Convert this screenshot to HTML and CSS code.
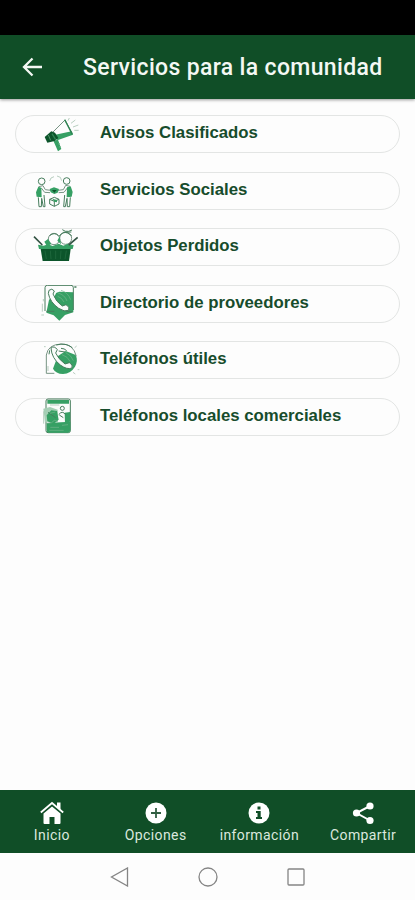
FILE: index.html
```html
<!DOCTYPE html>
<html lang="es">
<head>
    <meta charset="UTF-8">
    <meta name="viewport" content="width=device-width, initial-scale=1.0">
    <title>Servicios para la comunidad</title>
    <link rel="stylesheet" href="styles.css">
</head>
<body>
    <div class="status-bar"></div>
    <header class="header">
        <svg class="back" viewBox="0 0 24 24"><path d="M22 12H4M12.5 3.5L4 12L12.5 20.5"/></svg>
        <h1>Servicios para la comunidad</h1>
    </header>

    <main class="lista">
        <a class="item">
            <svg class="icono" viewBox="0 0 150 111">
                <path class="linea" d="M61 50L99 12L120 51L78 64"/>
                <path class="verde" d="M70 56L119 46L123 56L76 73ZM64 74L78 71L88 99L78 106Z"/>
                <path class="oscuro" d="M38 63L58 46L69 50L79 66L68 75L46 80Z"/>
                <path class="grueso-verde" d="M98 11L121 55M60 53L71 71"/>
                <path class="puntos" d="M108 14L112 6M117 22L130 12M123 33L139 27M127 43L140 43"/>
                <path class="claro" d="M49 57L56 73M78 84L84 82M81 93L87 91"/>
            </svg>
            <span>Avisos Clasificados</span>
        </a>
        <a class="item">
            <svg class="icono" viewBox="0 0 150 111">
                <circle class="trazo" cx="29" cy="28" r="10"/>
                <circle class="trazo" cx="104" cy="27" r="10"/>
                <path class="linea" d="M20 44L33 41L40 53L56 55M28 48L38 61L54 62M114 43L101 40L94 53L78 55M106 48L96 61L80 62"/>
                <path class="trazo" d="M19 76L21 104H28L29 79L34 104H39L36 69M115 76L113 104H106L105 79L100 104H95L98 69"/>
                <path class="verde" d="M19 44L28 47L29 76L14 74L12 61ZM116 43L105 46L104 76L119 74L122 60Z"/>
                <path class="verde" d="M53 51L66 46L81 51L77 62L67 66L56 61Z"/>
                <path class="oscuro" d="M60 54H74L67 62Z"/>
                <path class="trazo" d="M53 82L67 76L81 82V96L67 103L53 96ZM53 82L67 88L81 82M67 88V103"/>
                <path class="verde" d="M61 80L75 84V91L67 89Z"/>
                <path class="puntos" d="M53 27L57 18L66 14M75 12L85 16L89 26"/>
            </svg>
            <span>Servicios Sociales</span>
        </a>
        <a class="item">
            <svg class="icono" viewBox="0 0 150 111">
                <circle class="linea" cx="66" cy="30" r="17"/>
                <circle class="linea" cx="101" cy="28" r="18"/>
                <path class="trazo" d="M53 20Q67 8 79 20M81 22Q92 6 107 12L119 20M91 2Q99 9 110 7L120 3M94 10L118 9"/>
                <path class="verde" d="M18 47L35 50L48 46L62 51L80 44L94 50L106 45L125 48L122 60H21Z"/>
                <path class="verde" d="M37 38L48 30L58 45L45 52ZM76 35L83 22L87 46Z"/>
                <path class="oscuro" d="M26 60H116L111 96H32Z"/>
                <path class="grueso" d="M6 23L31 48M137 25L110 48"/>
                <path class="trama" d="M39 65L43 90M55 65L57 90M71 65V90M87 65L85 90M103 65L99 90"/>
            </svg>
            <span>Objetos Perdidos</span>
        </a>
        <a class="item">
            <svg class="icono" viewBox="0 0 150 111">
                <path class="verde" d="M54 30L82 20L124 22V82L99 90L82 107L65 91L43 83Z"/>
                <path class="trazo" d="M46 1H117Q124 1 124 8V75M39 78V8Q39 1 46 1"/>
                <path class="blanco" d="M43 5H81L68 33L46 47Z"/>
                <path class="blanco trazo" d="M51 16Q60 8 67 18L63 27Q72 51 91 63L102 59Q115 66 110 76Q98 82 80 70Q54 52 49 25Z"/>
                <path class="claro" d="M78 24Q98 29 105 48M87 16Q108 22 116 44M77 34Q90 38 96 51"/>
                <path class="trazo" d="M43 79H67M103 80H121M129 6H134M129 3V9"/>
                <path class="puntos" d="M31 56V80M28 90H36M34 42V49"/>
            </svg>
            <span>Directorio de proveedores</span>
        </a>
        <a class="item">
            <svg class="icono" viewBox="0 0 150 111">
                <path class="verde" d="M77 43L101 27L131 39Q139 56 129 74Q116 95 93 96Q71 95 63 80Z"/>
                <path class="linea" d="M43 94V39Q48 7 88 6Q124 5 133 43M43 94H67"/>
                <path class="blanco trazo" d="M57 18Q67 10 76 23L71 33Q78 50 99 66L112 62Q124 68 120 78Q105 84 85 69Q59 49 57 18Z"/>
                <path class="claro" d="M90 38Q108 44 114 58M101 32Q118 39 124 56"/>
                <path class="trazo" d="M73 9Q101 1 121 17M87 19Q97 19 104 26M80 27L99 30M53 25L51 37"/>
                <path class="puntos" d="M36 14H41M128 17L134 12M123 91L130 96M137 83H142M48 87V72"/>
            </svg>
            <span>Teléfonos útiles</span>
        </a>
        <a class="item">
            <svg class="icono" viewBox="0 0 150 111">
                <rect class="blanco trazo" x="42" y="3" width="73" height="101" rx="6"/>
                <path class="verde" d="M46 6H111V17H46ZM44 75L115 71V98Q113 104 107 104H50Q43 102 44 96Z"/>
                <path class="suave" d="M34 32L54 27L77 35V71L39 73Z"/>
                <path class="verde" d="M44 52L58 37L75 39L80 65L64 79L46 69Z"/>
                <path class="verde" d="M98 44L114 42V71L99 76Z"/>
                <circle class="trazo" cx="91" cy="31" r="6"/>
                <path class="trazo" d="M80 50Q91 36 101 50M82 51L94 59M48 43L71 59"/>
                <path class="claro" d="M45 76L59 74L67 67L78 70M55 88H81M54 46L70 42M90 82L108 80M52 97H95"/>
                <path class="puntos" d="M35 40V77M54 21H82"/>
            </svg>
            <span>Teléfonos locales comerciales</span>
        </a>
    </main>

    <nav class="menu">
        <a>
            <svg viewBox="0 0 24 24"><path d="M3.5 12.5L12 5.5L20.5 12.5V22Q20.5 23 19.5 23H14.5V16H9.5V23H4.5Q3.5 23 3.5 22Z"/><path d="M17 1.5H20.5V9L17 6Z"/><path class="techo" d="M.8 11.5L12 2L23.2 11.5"/></svg>
            <span>Inicio</span>
        </a>
        <a>
            <svg viewBox="0 0 24 24"><circle cx="12" cy="12" r="10.5"/><path class="mas" d="M12 7V17M7 12H17"/></svg>
            <span>Opciones</span>
        </a>
        <a>
            <svg viewBox="0 0 24 24"><circle cx="12" cy="12" r="10.5"/><path class="info" d="M10.5 5.5H13.5V8.5H10.5ZM9 10H13.7V16H15V18H9V16H10.5V12H9Z"/></svg>
            <span>información</span>
        </a>
        <a>
            <svg viewBox="0 0 24 24"><path class="enlace" d="M19 5L5.5 12L19 19.5"/><circle cx="19" cy="5" r="3.6"/><circle cx="5.5" cy="12" r="3.6"/><circle cx="19" cy="19.5" r="3.6"/></svg>
            <span>Compartir</span>
        </a>
    </nav>
    <div class="sistema">
        <svg viewBox="0 0 20 20"><path d="M17.5 1V19L1.5 10Z"/></svg>
        <svg viewBox="0 0 20 20"><circle cx="10" cy="10" r="9"/></svg>
        <svg viewBox="0 0 20 20"><rect x="2" y="2" width="16" height="16" rx="1"/></svg>
    </div>
</body>
</html>
```
FILE: styles.css
```css
* {
    box-sizing: border-box;
}
body {
    margin: 0;
    height: 900px;
    display: flex;
    flex-direction: column;
    background: #fdfdfd;
    font-family: Roboto, sans-serif;
}
.status-bar {
    height: 35px;
    background: #000;
}
.header {
    height: 64px;
    display: flex;
    align-items: center;
    padding-left: 20px;
    gap: 39px;
    background: #104e27;
    box-shadow: 0 1px 3px rgba(0, 0, 0, 0.4);
}
.back {
    width: 24px;
    height: 24px;
    fill: none;
    stroke: #f4f8f4;
    stroke-width: 2.3;
}
.header h1 {
    margin: 0;
    padding-top: 1px;
    font-size: 23px;
    font-weight: 500;
    letter-spacing: 0.34px;
    white-space: nowrap;
    color: #f4f8f4;
}
.lista {
    flex: 1;
    display: flex;
    flex-direction: column;
    gap: 18.6px;
    padding: 16px 15px 0;
}
.item {
    height: 38px;
    display: flex;
    align-items: center;
    padding-left: 16px;
    gap: 18px;
    border: 1px solid #e3e5e4;
    border-radius: 20px;
    font-family: "Liberation Sans", Arial, sans-serif;
    font-size: 16.8px;
    font-weight: bold;
    color: #174c2c;
}
.item span {
    padding-bottom: 2px;
}
.icono {
    width: 50px;
    height: 37px;
    fill: none;
}
.verde {
    fill: #36a064;
}
.oscuro {
    fill: #0c552b;
}
.suave {
    fill: #a5cfb5;
}
.blanco {
    fill: #fafcfb;
}
.linea {
    stroke: #779484;
    stroke-width: 3;
}
.trazo {
    stroke: #477d5d;
    stroke-width: 3;
}
.grueso {
    stroke: #345444;
    stroke-width: 5;
}
.grueso-verde {
    stroke: #2f8453;
    stroke-width: 4;
}
.claro {
    stroke: #77b58e;
    stroke-width: 2;
}
.trama {
    stroke: #267044;
    stroke-width: 2;
}
.puntos {
    stroke: #aac4b3;
    stroke-width: 2.5;
}
.menu {
    height: 63px;
    display: grid;
    grid-template-columns: repeat(4, 1fr);
    background: #104e27;
}
.menu a {
    display: flex;
    flex-direction: column;
    align-items: center;
    padding-top: 11px;
    gap: 1px;
    font-size: 14px;
    line-height: 18px;
    letter-spacing: 0.4px;
    color: #dbe8de;
}
.menu svg {
    width: 24px;
    height: 24px;
    fill: #fff;
}
.menu .techo {
    fill: none;
    stroke: #fff;
    stroke-width: 1.8;
}
.menu .mas {
    stroke: #315f42;
    stroke-width: 1.8;
}
.menu .info {
    fill: #104e27;
}
.menu .enlace {
    fill: none;
    stroke: #fff;
    stroke-width: 2;
}
.sistema {
    height: 47px;
    display: flex;
    justify-content: center;
    align-items: center;
    gap: 68px;
}
.sistema svg {
    width: 20px;
    height: 20px;
    fill: none;
    stroke: #858585;
    stroke-width: 1.3;
}
```
